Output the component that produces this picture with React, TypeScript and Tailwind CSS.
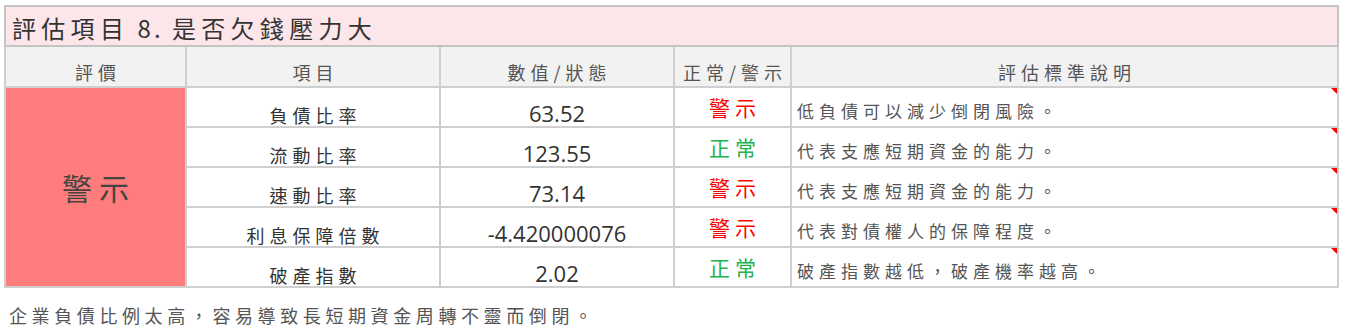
import React from 'react';

const rows = [
  { item: '負債比率', value: '63.52', ok: false, note: '低負債可以減少倒閉風險。' },
  { item: '流動比率', value: '123.55', ok: true, note: '代表支應短期資金的能力。' },
  { item: '速動比率', value: '73.14', ok: false, note: '代表支應短期資金的能力。' },
  { item: '利息保障倍數', value: '-4.420000076', ok: false, note: '代表對債權人的保障程度。' },
  { item: '破產指數', value: '2.02', ok: true, note: '破產指數越低，破產機率越高。' },
];

const cjk = "font-['Noto_Sans_CJK_TC','Noto_Sans',sans-serif]";
const num = "font-['Open_Sans','Noto_Sans_CJK_TC',sans-serif]";

const App = () => {
  return (
    <div className={`w-[1346px] h-[332px] bg-white pt-[5px] pl-[4px] ${cjk}`}>
      <table className="table-fixed border-collapse w-[1335px] border-2 border-[#c4c4c4]">
        <colgroup>
          <col className="w-[181px]" />
          <col className="w-[254px]" />
          <col className="w-[234px]" />
          <col className="w-[117px]" />
          <col />
        </colgroup>
        <thead>
          <tr className="h-[40px] bg-[#fde6ea]">
            <th colSpan={5} className="border-2 border-[#c4c4c4] text-left pl-[6px] pt-[4px] text-[24px] tracking-[5.3px] font-normal text-[#333] leading-none">
              評估項目<span className="tracking-[3px]"> 8. </span>是否欠錢壓力大
            </th>
          </tr>
          <tr className="h-[41px] bg-[#f2f2f2] text-[18px] tracking-[5px] font-normal text-[#555]">
            <th className="border-2 border-[#cfcfcf] font-normal pt-[10px] pl-[5px] leading-none">評價</th>
            <th className="border-2 border-[#cfcfcf] font-normal pt-[10px] pl-[5px] leading-none">項目</th>
            <th className="border-2 border-[#cfcfcf] font-normal pt-[10px] pl-[5px] leading-none">數值/狀態</th>
            <th className="border-2 border-[#cfcfcf] font-normal pt-[10px] pl-[5px] leading-none">正常/警示</th>
            <th className="border-2 border-[#cfcfcf] font-normal pt-[10px] pl-[5px] leading-none">評估標準說明</th>
          </tr>
        </thead>
        <tbody>
          {rows.map((r, i) => (
            <tr key={r.item} className="h-[40px] leading-none">
              {i === 0 && (
                <td rowSpan={5} className="border-2 border-[#cfcfcf] bg-[#ff7c7c] text-center text-[30px] tracking-[7px] text-[#444] pl-[7px]">
                  警示
                </td>
              )}
              <td className="border-2 border-[#cfcfcf] text-center text-[18px] tracking-[5px] pl-[5px] text-[#333] pt-[16px]">{r.item}</td>
              <td className={`border-2 border-[#cfcfcf] text-center text-[22px] text-[#333] pt-[12px] ${num}`}>{r.value}</td>
              <td className={`border-2 border-[#cfcfcf] text-center text-[21px] tracking-[5px] pl-[5px] ${r.ok ? 'text-[#22b14c]' : 'text-[#ff0000]'}`}>
                {r.ok ? '正常' : '警示'}
              </td>
              <td className="relative border-2 border-[#cfcfcf] text-left pl-[5px] pt-[6px] text-[17px] tracking-[5px] text-[#555]">
                {r.note}
                <span className="absolute top-0 right-0 w-0 h-0 border-t-[6px] border-t-[#ff0000] border-l-[6px] border-l-transparent" />
              </td>
            </tr>
          ))}
        </tbody>
      </table>
      <p className="mt-[18px] ml-[5px] text-[18px] tracking-[4.6px] text-[#555] leading-none">
        企業負債比例太高，容易導致長短期資金周轉不靈而倒閉。
      </p>
    </div>
  );
};

export default App;
